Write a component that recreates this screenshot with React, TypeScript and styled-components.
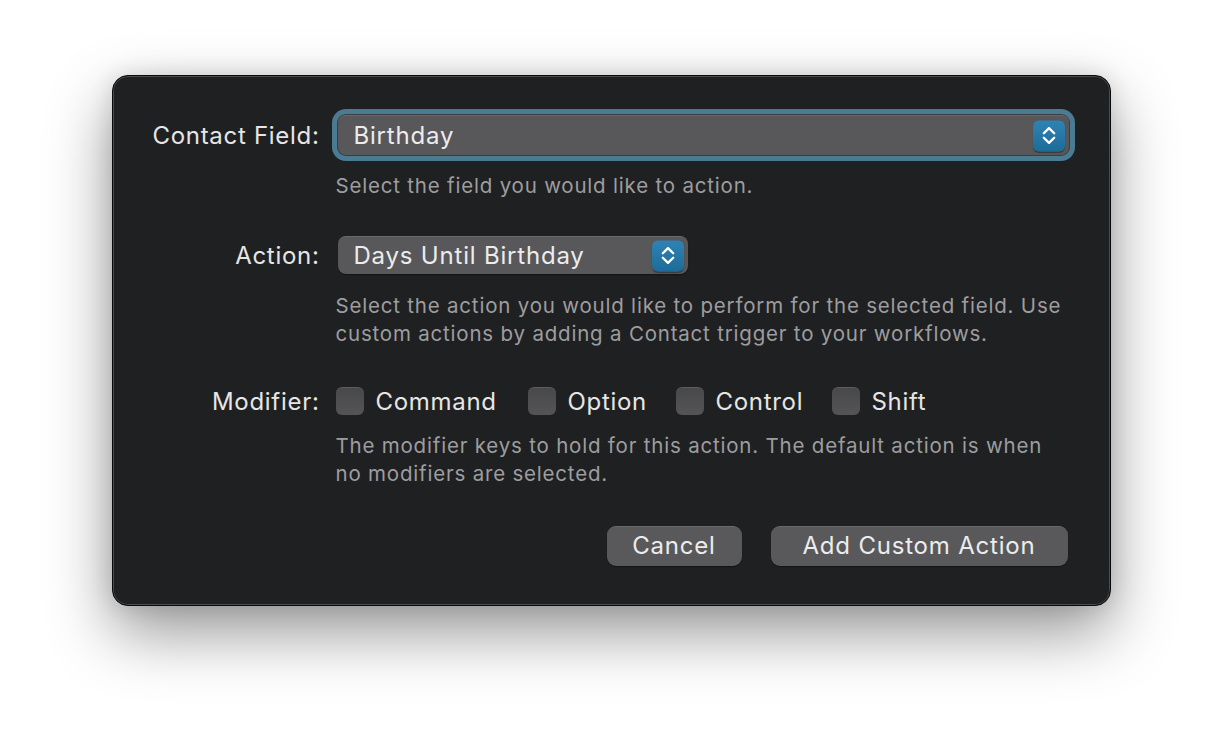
import React from "react";
import styled, { createGlobalStyle } from "styled-components";

const Global = createGlobalStyle`
  html, body { margin: 0; padding: 0; background: #ffffff; }
  body { font-family: Inter, "Noto Sans", "Liberation Sans", sans-serif; -webkit-font-smoothing: antialiased; }
`;

const Page = styled.div`
  width: 1222px;
  height: 754px;
  display: flex;
  justify-content: center;
  align-items: flex-start;
  padding-top: 75px;
  box-sizing: border-box;
  background: #ffffff;
  overflow: hidden;
`;

const Window = styled.div`
  width: 999px;
  box-sizing: border-box;
  background: #1f2022;
  border: 1px solid #0a0a0a;
  border-radius: 16px;
  box-shadow: inset 0 0 0 1px #4c4c4e, 0 26px 64px rgba(0, 0, 0, 0.42), 0 0 22px rgba(0, 0, 0, 0.12);
  padding: 39px 41px 39px 0;
  display: flex;
  flex-direction: column;
`;

const Field = styled.div<{ $top: number }>`
  display: grid;
  grid-template-columns: 207px 1fr;
  column-gap: 16px;
  margin-top: ${(p) => p.$top}px;
`;

const Label = styled.div<{ $h: number }>`
  height: ${(p) => p.$h}px;
  display: flex;
  align-items: center;
  justify-content: flex-end;
  color: #e6e6e6;
  font-size: 24px;
  letter-spacing: 0.7px;
`;

const Content = styled.div`
  display: flex;
  flex-direction: column;
  align-items: flex-start;
`;

const Popup = styled.div<{ $w?: number; $h: number; $focus?: boolean }>`
  position: relative;
  margin-left: 2px;
  width: ${(p) => (p.$w ? `${p.$w}px` : "calc(100% - 2px)")};
  height: ${(p) => p.$h}px;
  box-sizing: border-box;
  background: #58585a;
  border-radius: 8px;
  border-top: 1px solid #69696b;
  display: flex;
  align-items: center;
  padding-left: 16px;
  padding-bottom: 1px;
  color: #ececec;
  font-size: 24px;
  letter-spacing: 0.8px;
  box-shadow: ${(p) =>
    p.$focus ? "0 0 0 1px #3c3d3f, 0 0 0 6px #4a7b93" : "0 1px 1px rgba(0,0,0,0.4)"};
`;

const Stepper = styled.div<{ $h: number }>`
  position: absolute;
  right: 4px;
  top: 50%;
  transform: translateY(-50%);
  width: 32px;
  height: ${(p) => p.$h}px;
  border-radius: 6px;
  background: linear-gradient(#2f83b3, #1d6b98);
  box-shadow: 0 1px 1px rgba(0, 0, 0, 0.35);
  display: flex;
  align-items: center;
  justify-content: center;
`;

const Help = styled.div<{ $top: number }>`
  margin-top: ${(p) => p.$top}px;
  color: #9d9d9f;
  font-size: 20.5px;
  line-height: 28px;
  letter-spacing: 0.8px;
  max-width: 732px;
`;

const CheckRow = styled.div`
  height: 40px;
  display: flex;
  align-items: center;
`;

const CheckItem = styled.label<{ $w: number }>`
  display: flex;
  align-items: center;
  width: ${(p) => p.$w}px;
  color: #e6e6e6;
  font-size: 24px;
  letter-spacing: 0.7px;
`;

const Box = styled.span`
  width: 28px;
  height: 28px;
  box-sizing: border-box;
  border-radius: 6px;
  background: linear-gradient(#49494b, #545456);
  border-top: 1px solid #5c5c5e;
  margin-right: 12px;
  flex-shrink: 0;
`;

const Buttons = styled.div`
  margin-top: 38px;
  padding-right: 1px;
  display: flex;
  justify-content: flex-end;
  gap: 29px;
`;

const Button = styled.button<{ $w: number }>`
  width: ${(p) => p.$w}px;
  height: 40px;
  border: none;
  border-top: 1px solid #6a6a6c;
  border-radius: 9px;
  background: #59595b;
  color: #ececec;
  font-family: inherit;
  font-size: 24px;
  letter-spacing: 0.8px;
  box-shadow: 0 1px 1px rgba(0, 0, 0, 0.4);
  padding: 0 0 2px 0;
`;

const Chevrons = () => (
  <svg width="16" height="22" viewBox="0 0 16 22" fill="none">
    <path d="M2.8 8.8 L8 3.6 L13.2 8.8" stroke="#ffffff" strokeWidth="2.3" strokeLinecap="round" strokeLinejoin="round" />
    <path d="M2.8 13.2 L8 18.4 L13.2 13.2" stroke="#ffffff" strokeWidth="2.3" strokeLinecap="round" strokeLinejoin="round" />
  </svg>
);

export default function App() {
  return (
    <Page>
      <Global />
      <Window>
        <Field $top={0}>
          <Label $h={40}>Contact Field:</Label>
          <Content>
            <Popup $h={40} $focus>
              Birthday
              <Stepper $h={31}>
                <Chevrons />
              </Stepper>
            </Popup>
            <Help $top={17}>Select the field you would like to action.</Help>
          </Content>
        </Field>

        <Field $top={36}>
          <Label $h={38}>Action:</Label>
          <Content>
            <Popup $h={38} $w={350}>
              Days Until Birthday
              <Stepper $h={31}>
                <Chevrons />
              </Stepper>
            </Popup>
            <Help $top={18}>
              Select the action you would like to perform for the selected field. Use custom actions by adding a
              Contact trigger to your workflows.
            </Help>
          </Content>
        </Field>

        <Field $top={33}>
          <Label $h={40}>Modifier:</Label>
          <Content>
            <CheckRow>
              <CheckItem $w={192}>
                <Box />
                Command
              </CheckItem>
              <CheckItem $w={148}>
                <Box />
                Option
              </CheckItem>
              <CheckItem $w={156}>
                <Box />
                Control
              </CheckItem>
              <CheckItem $w={120}>
                <Box />
                Shift
              </CheckItem>
            </CheckRow>
            <Help $top={11}>
              The modifier keys to hold for this action. The default action is when no modifiers are selected.
            </Help>
          </Content>
        </Field>

        <Buttons>
          <Button $w={135}>Cancel</Button>
          <Button $w={297}>Add Custom Action</Button>
        </Buttons>
      </Window>
    </Page>
  );
}
